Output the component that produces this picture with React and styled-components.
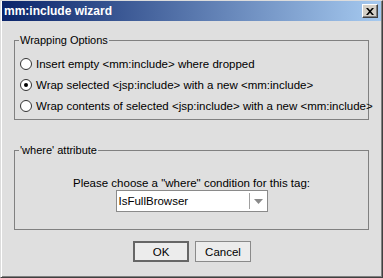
import React from "react";
import styled, { createGlobalStyle } from "styled-components";

const Global = createGlobalStyle`
  html, body {
    margin: 0;
    padding: 0;
    background: #dfdfdf;
  }
  * { box-sizing: border-box; }
`;

const font = `"Liberation Sans", "DejaVu Sans", sans-serif`;

const options = [
  "Insert empty <mm:include> where dropped",
  "Wrap selected <jsp:include> with a new <mm:include>",
  "Wrap contents of selected <jsp:include> with a new <mm:include>",
];

const Window = styled.div`
  width: 383px;
  height: 278px;
  display: flex;
  flex-direction: column;
  background: #dfdfdf;
  border-top: 1px solid #dcdcdc;
  border-left: 1px solid #dcdcdc;
  border-right: 1px solid #404040;
  border-bottom: 1px solid #404040;
  box-shadow: inset 1px 0 0 #ffffff, inset -1px -1px 0 #808080;
  font-family: ${font};
  font-size: 11.5px;
  color: #000;
`;

const TitleBar = styled.div`
  height: 20px;
  margin: 0 1px;
  display: flex;
  align-items: center;
  justify-content: space-between;
  padding: 0 3px 0 2px;
  background: linear-gradient(to right, #0a246a, #a6caf0);
`;

const Title = styled.span`
  color: #fff;
  font-weight: 700;
  font-size: 12px;
`;

const CloseButton = styled.span`
  width: 16px;
  height: 14px;
  display: flex;
  align-items: center;
  justify-content: center;
  background: #d4d0c8;
  border-top: 1px solid #fff;
  border-left: 1px solid #fff;
  border-right: 1px solid #404040;
  border-bottom: 1px solid #404040;
  box-shadow: inset -1px -1px 0 #808080;
`;

const Body = styled.div`
  flex: 1;
  display: flex;
  flex-direction: column;
  padding: 12px 13px 0 13px;
`;

const Group = styled.fieldset`
  margin: ${(p) => (p.$gap ? "23px" : "0")} 0 0 0;
  padding: 0;
  border: 1px solid #808080;
  min-width: 0;
`;

const Legend = styled.legend`
  margin-left: 4px;
  padding: 0 1px;
  line-height: 14px;
  font-size: 11px;
`;

const RadioList = styled.div`
  display: flex;
  flex-direction: column;
  padding: 6px 0 3px 5px;
`;

const RadioRow = styled.label`
  height: 21px;
  display: flex;
  align-items: center;
  gap: 4px;
  white-space: nowrap;
`;

const Radio = styled.span`
  width: 12px;
  height: 12px;
  border-radius: 50%;
  border: 1px solid #333;
  background: #fff;
  display: flex;
  align-items: center;
  justify-content: center;
  flex-shrink: 0;
  &::after {
    content: "";
    width: 4px;
    height: 4px;
    border-radius: 50%;
    background: #000;
    display: ${(p) => (p.$checked ? "block" : "none")};
  }
`;

const WhereBox = styled.div`
  display: grid;
  justify-items: center;
  padding: 19px 0 17px 0;
`;

const Prompt = styled.div`
  line-height: 14px;
  white-space: nowrap;
`;

const Combo = styled.div`
  width: 152px;
  height: 22px;
  display: flex;
  background: #fff;
  border: 1px solid #8a8a8a;
`;

const ComboText = styled.div`
  flex: 1;
  display: flex;
  align-items: center;
  padding-left: 2px;
`;

const ComboArrow = styled.div`
  width: 18px;
  display: flex;
  align-items: center;
  justify-content: center;
  margin: 2px 0;
  border-left: 1px solid #a0a0a0;
`;

const ButtonRow = styled.div`
  display: flex;
  justify-content: center;
  gap: 6px;
  margin-top: 11px;
  padding-left: 1px;
`;

const Button = styled.button`
  width: 56px;
  height: 21px;
  padding: 0;
  font-family: ${font};
  font-size: 11.5px;
  color: #000;
  background: #ececec;
  border: ${(p) => (p.$default ? "2px solid #666" : "1px solid #8a8a8a")};
`;

const App = () => {
  const selected = 1;
  return (
    <>
      <Global />
      <Window>
        <TitleBar>
          <Title>mm:include wizard</Title>
          <CloseButton>
            <svg width="8" height="7" viewBox="0 0 8 7">
              <path d="M0 0h2l2 2.2L6 0h2L5 3.5 8 7H6L4 4.8 2 7H0l3-3.5z" fill="#000" />
            </svg>
          </CloseButton>
        </TitleBar>

        <Body>
          <Group>
            <Legend>Wrapping Options</Legend>
            <RadioList>
              {options.map((o, i) => (
                <RadioRow key={i}>
                  <Radio $checked={i === selected} />
                  <span>{o}</span>
                </RadioRow>
              ))}
            </RadioList>
          </Group>

          <Group $gap>
            <Legend>'where' attribute</Legend>
            <WhereBox>
              <Prompt>Please choose a "where" condition for this tag:</Prompt>
              <Combo>
                <ComboText>IsFullBrowser</ComboText>
                <ComboArrow>
                  <svg width="9" height="5" viewBox="0 0 9 5">
                    <path d="M0 0h9L4.5 5z" fill="#8a8a8a" />
                  </svg>
                </ComboArrow>
              </Combo>
            </WhereBox>
          </Group>

          <ButtonRow>
            <Button $default>OK</Button>
            <Button>Cancel</Button>
          </ButtonRow>
        </Body>
      </Window>
    </>
  );
};

export default App;
